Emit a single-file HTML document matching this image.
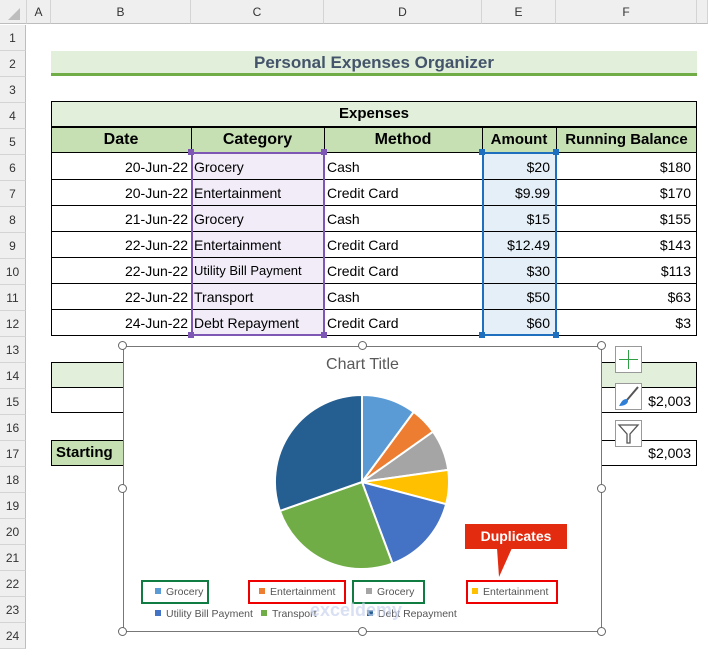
<!DOCTYPE html>
<html><head><meta charset="utf-8"><style>
*{margin:0;padding:0;box-sizing:border-box}
body{width:708px;height:647px;overflow:hidden;background:#fff;position:relative;font-family:"Liberation Sans",Arial,sans-serif;color:#000}
.a{position:absolute}
.ch{position:absolute;top:0;height:24px;background:#efefef;border-right:1px solid #d4d4d4;border-bottom:1px solid #bdbdbd;font-size:12px;color:#333;text-align:center;line-height:24px}
.rh{position:absolute;left:0;width:26px;height:26px;background:#efefef;border-bottom:1px solid #d4d4d4;border-right:1px solid #bdbdbd;font-size:12px;color:#333;text-align:center;line-height:26px}
.c{position:absolute;height:26px;font-size:14px;line-height:26px;white-space:nowrap;overflow:hidden;padding:0 3px}
.r{text-align:right}
.b{font-weight:bold}
.h{position:absolute;width:6px;height:6px}
.ho{position:absolute;width:9px;height:9px;border:1.5px solid #666;border-radius:50%;background:#fff}
.lg{position:absolute;font-size:10.5px;color:#555;white-space:nowrap}
.sq{display:inline-block;width:6px;height:6px;margin-right:5px;vertical-align:1px}
.bx{position:absolute;height:24px;border:2px solid}
</style></head><body>
<!-- column headers -->
<div class="ch" style="left:0;width:27px;background:#efefef"></div>
<div class="a" style="left:8px;top:8px;width:0;height:0;border-left:12px solid transparent;border-bottom:12px solid #bdbdbd"></div>
<div class="ch" style="left:27px;width:24px">A</div>
<div class="ch" style="left:51px;width:140px">B</div>
<div class="ch" style="left:191px;width:133px">C</div>
<div class="ch" style="left:324px;width:158px">D</div>
<div class="ch" style="left:482px;width:74px">E</div>
<div class="ch" style="left:556px;width:141px">F</div>
<div class="ch" style="left:697px;width:11px"></div>
<!-- row headers -->
<div class="rh" style="top:25px">1</div><div class="rh" style="top:51px">2</div><div class="rh" style="top:77px">3</div><div class="rh" style="top:103px">4</div><div class="rh" style="top:129px">5</div><div class="rh" style="top:155px">6</div><div class="rh" style="top:181px">7</div><div class="rh" style="top:207px">8</div><div class="rh" style="top:233px">9</div><div class="rh" style="top:259px">10</div><div class="rh" style="top:285px">11</div><div class="rh" style="top:311px">12</div><div class="rh" style="top:337px">13</div><div class="rh" style="top:363px">14</div><div class="rh" style="top:389px">15</div><div class="rh" style="top:415px">16</div><div class="rh" style="top:441px">17</div><div class="rh" style="top:467px">18</div><div class="rh" style="top:493px">19</div><div class="rh" style="top:519px">20</div><div class="rh" style="top:545px">21</div><div class="rh" style="top:571px">22</div><div class="rh" style="top:597px">23</div><div class="rh" style="top:623px">24</div>
<!-- title -->
<div class="a" style="left:51px;top:51px;width:646px;height:22px;background:#e2efda"></div>
<div class="a" style="left:51px;top:73px;width:646px;height:3px;background:#70ad47"></div>
<div class="a b" style="left:51px;top:51px;width:646px;text-align:center;font-size:17px;line-height:24px;color:#44546a">Personal Expenses Organizer</div>
<!-- table -->
<div class="a" style="left:51px;top:101px;width:646px;height:26px;background:#e2efda;border:1px solid #000"></div>
<div class="a b" style="left:51px;top:101px;width:646px;text-align:center;font-size:15px;line-height:26px">Expenses</div>
<div class="a" style="left:51px;top:127px;width:646px;height:26px;background:#c6e0b4;border:1px solid #000"></div>
<div class="a" style="left:191px;top:336px;width:133px"></div>
<div class="a" style="left:191px;top:153px;width:133px;height:183px;background:#f1ecf8"></div>
<div class="a" style="left:482px;top:153px;width:74px;height:183px;background:#e4eff8"></div>
<div class="c b" style="left:51px;top:127px;width:140px;text-align:center;font-size:16px">Date</div>
<div class="c b" style="left:191px;top:127px;width:133px;text-align:center;font-size:16px">Category</div>
<div class="c b" style="left:324px;top:127px;width:158px;text-align:center;font-size:16px">Method</div>
<div class="c b" style="left:482px;top:127px;width:74px;text-align:center;font-size:15px;padding:0">Amount</div>
<div class="c b" style="left:556px;top:127px;width:141px;text-align:center;font-size:15px;padding:0">Running Balance</div>
<!-- grid -->
<div class="a" style="left:51px;top:153px;width:646px;height:183px;border:1px solid #000;border-top:none"></div>
<div class="a" style="left:51px;top:179px;width:646px;height:1px;background:#000"></div>
<div class="a" style="left:51px;top:205px;width:646px;height:1px;background:#000"></div>
<div class="a" style="left:51px;top:231px;width:646px;height:1px;background:#000"></div>
<div class="a" style="left:51px;top:257px;width:646px;height:1px;background:#000"></div>
<div class="a" style="left:51px;top:283px;width:646px;height:1px;background:#000"></div>
<div class="a" style="left:51px;top:309px;width:646px;height:1px;background:#000"></div>
<div class="a" style="left:191px;top:127px;width:1px;height:209px;background:#000"></div>
<div class="a" style="left:324px;top:127px;width:1px;height:209px;background:#000"></div>
<div class="a" style="left:482px;top:127px;width:1px;height:209px;background:#000"></div>
<div class="a" style="left:556px;top:127px;width:1px;height:209px;background:#000"></div>
<!-- selection outlines -->
<div class="a" style="left:191px;top:152px;width:134px;height:184px;border:2px solid #7e57b5"></div>
<div class="h" style="left:188px;top:149px;background:#7e57b5"></div><div class="h" style="left:321px;top:149px;background:#7e57b5"></div><div class="h" style="left:188px;top:332px;background:#7e57b5"></div><div class="h" style="left:321px;top:332px;background:#7e57b5"></div>
<div class="a" style="left:482px;top:152px;width:75px;height:184px;border:2px solid #1f6fbf"></div>
<div class="h" style="left:479px;top:149px;background:#1f6fbf"></div><div class="h" style="left:553px;top:149px;background:#1f6fbf"></div><div class="h" style="left:479px;top:332px;background:#1f6fbf"></div><div class="h" style="left:553px;top:332px;background:#1f6fbf"></div>
<!-- data -->
<div class="c r" style="left:51px;top:154px;width:140px">20-Jun-22</div><div class="c" style="left:191px;top:154px">Grocery</div><div class="c" style="left:324px;top:154px">Cash</div><div class="c r" style="left:482px;top:154px;width:74px;padding-right:6px">$20</div><div class="c r" style="left:556px;top:154px;width:141px;padding-right:6px">$180</div>
<div class="c r" style="left:51px;top:180px;width:140px">20-Jun-22</div><div class="c" style="left:191px;top:180px">Entertainment</div><div class="c" style="left:324px;top:180px">Credit Card</div><div class="c r" style="left:482px;top:180px;width:74px;padding-right:6px">$9.99</div><div class="c r" style="left:556px;top:180px;width:141px;padding-right:6px">$170</div>
<div class="c r" style="left:51px;top:206px;width:140px">21-Jun-22</div><div class="c" style="left:191px;top:206px">Grocery</div><div class="c" style="left:324px;top:206px">Cash</div><div class="c r" style="left:482px;top:206px;width:74px;padding-right:6px">$15</div><div class="c r" style="left:556px;top:206px;width:141px;padding-right:6px">$155</div>
<div class="c r" style="left:51px;top:232px;width:140px">22-Jun-22</div><div class="c" style="left:191px;top:232px">Entertainment</div><div class="c" style="left:324px;top:232px">Credit Card</div><div class="c r" style="left:482px;top:232px;width:74px;padding-right:6px">$12.49</div><div class="c r" style="left:556px;top:232px;width:141px;padding-right:6px">$143</div>
<div class="c r" style="left:51px;top:258px;width:140px">22-Jun-22</div><div class="c" style="left:191px;top:258px;width:133px;font-size:13px">Utility Bill Payment</div><div class="c" style="left:324px;top:258px">Credit Card</div><div class="c r" style="left:482px;top:258px;width:74px;padding-right:6px">$30</div><div class="c r" style="left:556px;top:258px;width:141px;padding-right:6px">$113</div>
<div class="c r" style="left:51px;top:284px;width:140px">22-Jun-22</div><div class="c" style="left:191px;top:284px">Transport</div><div class="c" style="left:324px;top:284px">Cash</div><div class="c r" style="left:482px;top:284px;width:74px;padding-right:6px">$50</div><div class="c r" style="left:556px;top:284px;width:141px;padding-right:6px">$63</div>
<div class="c r" style="left:51px;top:310px;width:140px">24-Jun-22</div><div class="c" style="left:191px;top:310px">Debt Repayment</div><div class="c" style="left:324px;top:310px">Credit Card</div><div class="c r" style="left:482px;top:310px;width:74px;padding-right:6px">$60</div><div class="c r" style="left:556px;top:310px;width:141px;padding-right:6px">$3</div>
<!-- lower tables -->
<div class="a" style="left:51px;top:362px;width:646px;height:26px;background:#e2efda;border:1px solid #000"></div>
<div class="a" style="left:51px;top:387px;width:646px;height:26px;border:1px solid #000"></div>
<div class="c r" style="left:556px;top:388px;width:141px;padding-right:6px">$2,003</div>
<div class="a" style="left:51px;top:440px;width:646px;height:26px;border:1px solid #000"></div>
<div class="a" style="left:52px;top:441px;width:72px;height:24px;background:#c6e0b4"></div>
<div class="c b" style="left:53px;top:440px;font-size:15px">Starting</div>
<div class="c r" style="left:556px;top:440px;width:141px;padding-right:6px">$2,003</div>
<!-- chart -->
<div class="a" style="left:123px;top:346px;width:479px;height:286px;background:#fff;border:1px solid #777"></div>
<div class="a" style="left:123px;top:356px;width:479px;text-align:center;font-size:16px;color:#595959">Chart Title</div>
<svg class="a" style="left:0;top:0" width="708" height="647">
<g stroke="#fff" stroke-width="2" stroke-linejoin="round">
<path d="M362 482 L362 395 A87 87 0 0 1 413.7 412 Z" fill="#5b9bd5"/>
<path d="M362 482 L413.7 412 A87 87 0 0 1 433 431.7 Z" fill="#ed7d31"/>
<path d="M362 482 L433 431.7 A87 87 0 0 1 448.2 469.9 Z" fill="#a5a5a5"/>
<path d="M362 482 L448.2 469.9 A87 87 0 0 1 446.1 504.2 Z" fill="#ffc000"/>
<path d="M362 482 L446.1 504.2 A87 87 0 0 1 392.5 563.5 Z" fill="#4472c4"/>
<path d="M362 482 L392.5 563.5 A87 87 0 0 1 279.9 510.9 Z" fill="#70ad47"/>
<path d="M362 482 L279.9 510.9 A87 87 0 0 1 362 395 Z" fill="#255e91"/>
</g>
<path d="M497 548 L512 548 L499 577 Z" fill="#e32b10"/>
</svg>
<div class="a b" style="left:465px;top:524px;width:102px;height:25px;background:#e32b10;color:#fff;font-size:14px;text-align:center;line-height:25px">Duplicates</div>
<div class="bx" style="left:141px;top:580px;width:68px;border-color:#107c41"></div>
<div class="bx" style="left:248px;top:580px;width:98px;border-color:#e00"></div>
<div class="bx" style="left:352px;top:580px;width:73px;border-color:#107c41"></div>
<div class="bx" style="left:466px;top:580px;width:92px;border-color:#e00"></div>
<div class="lg" style="left:155px;top:586px"><span class="sq" style="background:#5b9bd5"></span>Grocery</div>
<div class="lg" style="left:259px;top:586px"><span class="sq" style="background:#ed7d31"></span>Entertainment</div>
<div class="lg" style="left:366px;top:586px"><span class="sq" style="background:#a5a5a5"></span>Grocery</div>
<div class="lg" style="left:472px;top:586px"><span class="sq" style="background:#ffc000"></span>Entertainment</div>
<div class="lg" style="left:155px;top:608px"><span class="sq" style="background:#4472c4"></span>Utility Bill Payment</div>
<div class="lg" style="left:261px;top:608px"><span class="sq" style="background:#70ad47"></span>Transport</div>
<div class="lg" style="left:367px;top:608px"><span class="sq" style="background:#255e91"></span>Debt Repayment</div>
<div class="a" style="left:310px;top:600px;font-size:18px;color:#c9d3ee;font-weight:bold;opacity:.7">exceldemy</div>
<div class="ho" style="left:118px;top:341px"></div><div class="ho" style="left:358px;top:341px"></div><div class="ho" style="left:597px;top:341px"></div>
<div class="ho" style="left:118px;top:484px"></div><div class="ho" style="left:597px;top:484px"></div>
<div class="ho" style="left:118px;top:627px"></div><div class="ho" style="left:358px;top:627px"></div><div class="ho" style="left:597px;top:627px"></div>
<!-- side buttons -->
<div class="a" style="left:615px;top:346px;width:27px;height:27px;border:1px solid #999;background:#fff"></div>
<div class="a" style="left:619px;top:359px;width:19px;height:1px;background:#2ea043"></div>
<div class="a" style="left:628px;top:350px;width:1px;height:19px;background:#2ea043"></div>
<div class="a" style="left:615px;top:383px;width:27px;height:27px;border:1px solid #999;background:#fff"></div>
<svg class="a" style="left:615px;top:383px" width="27" height="27"><path d="M23 4 L12 17" stroke="#555" stroke-width="2"/><path d="M12 16 C7 16 6 20 4 23 C9 23 13 21 13 18 Z" fill="#2f7fd6"/></svg>
<div class="a" style="left:615px;top:420px;width:27px;height:27px;border:1px solid #999;background:#fff"></div>
<svg class="a" style="left:615px;top:420px" width="27" height="27"><path d="M4 5 L23 5 L15 14 L15 23 L12 23 L12 14 Z" fill="none" stroke="#555" stroke-width="1.3"/></svg>
</body></html>
